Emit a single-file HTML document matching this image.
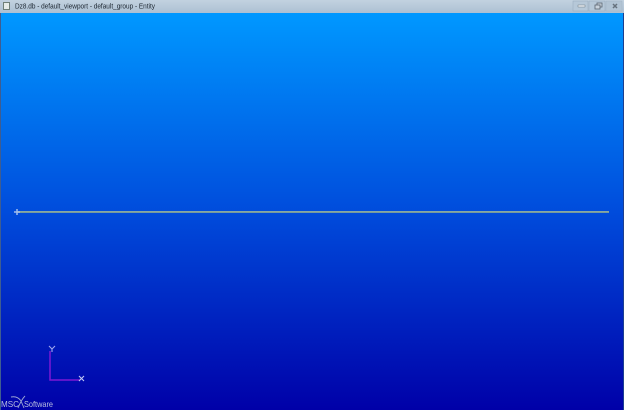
<!DOCTYPE html>
<html>
<head>
<meta charset="utf-8">
<style>
html,body{margin:0;padding:0;width:624px;height:410px;overflow:hidden;background:#000}
#title{position:absolute;left:0;top:0;width:624px;height:13px;background:linear-gradient(#c2d2e0,#adc0d2);}
#icon{position:absolute;left:3px;top:2px;width:7px;height:8px;background:#e6ece8;border:1px solid #6f8078;box-sizing:border-box}
#view{position:absolute;left:1px;top:13px;width:623px;height:397px;background:linear-gradient(#0098ff 0%,#004cdc 50%,#0000a8 100%)}
#bl{position:absolute;left:0;top:13px;width:1px;height:397px;background:#3f5d90}
#br{position:absolute;left:623px;top:13px;width:1px;height:397px;background:#1c3f90}
.line{position:absolute;left:17px;top:211px;width:592px;height:2px;background:linear-gradient(#8fb0a8,#6f9498)}
svg{position:absolute;left:0;top:0}
</style>
</head>
<body>
<div id="title"><div id="icon"></div></div>
<div id="view"></div>
<div id="bl"></div><div id="br"></div>
<div class="line"></div>
<svg width="624" height="410" viewBox="0 0 624 410">
<text x="15" y="8.500" font-family="'Liberation Sans',sans-serif" font-size="7" fill="#1c2630" textLength="140" lengthAdjust="spacingAndGlyphs">Dz8.db - default_viewport - default_group - Entity</text>
<!-- window buttons -->
<rect x="573" y="1" width="15" height="10" fill="#b6c8d8" stroke="#96a9bb" stroke-width="0.5"/>
<rect x="589" y="1" width="16" height="10" fill="#b6c8d8" stroke="#96a9bb" stroke-width="0.5"/>
<rect x="606" y="1" width="16" height="10" fill="#b2c4d4" stroke="#a0b2c4" stroke-width="0.5"/>
<rect x="578" y="5" width="7" height="2" fill="#e8eef2" stroke="#59636e" stroke-width="0.4"/>
<rect x="597" y="3" width="5" height="4" fill="#c8d2dc" stroke="#59636e" stroke-width="0.8"/>
<rect x="595" y="5" width="5" height="4" fill="#c8d2dc" stroke="#59636e" stroke-width="0.8"/>
<path d="M613 4l4 4M617 4l-4 4" stroke="#66727e" stroke-width="1.5"/>
<!-- start marker -->
<path d="M17 209v6M14 212h6" stroke="#a0bcec" stroke-width="1.5"/>
<!-- axes -->
<path d="M50 351V380H80" fill="none" stroke="#7c18d4" stroke-width="1.500"/>
<path d="M49 346l3 3 3-3M52 349v3" fill="none" stroke="#a0a8ee" stroke-width="1.100"/>
<path d="M79 376l5 5M84 376l-5 5" fill="none" stroke="#c0c8f4" stroke-width="1.100"/>
<!-- logo swoosh -->
<path d="M11 397c5-1 8 1 10 4l3 7M25 396c-3 3-5 7-7 12" fill="none" stroke="#9aa4d4" stroke-width="0.900"/>
<text x="1" y="407" font-family="'Liberation Sans',sans-serif" font-size="8.500" fill="#b8bee0" textLength="18" lengthAdjust="spacingAndGlyphs">MSC</text>
<text x="24" y="407" font-family="'Liberation Sans',sans-serif" font-size="8.500" fill="#b8bee0" textLength="29" lengthAdjust="spacingAndGlyphs">Software</text>
</svg>
</body>
</html>
